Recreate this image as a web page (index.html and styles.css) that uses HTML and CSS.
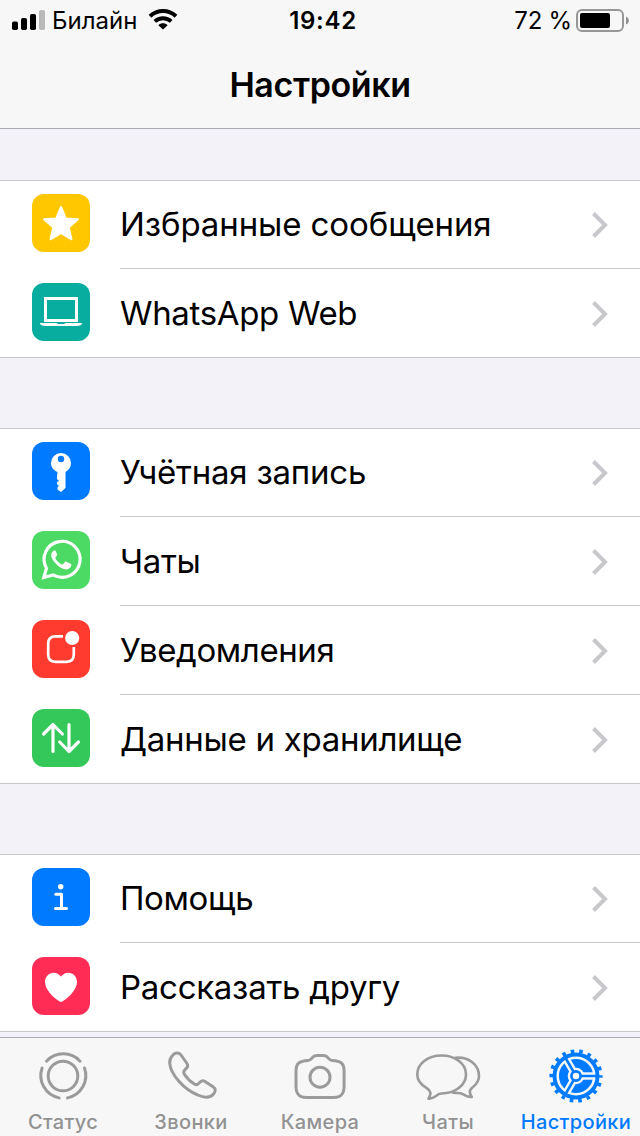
FILE: index.html
```html
<!DOCTYPE html>
<html lang="ru">
<head>
<meta charset="utf-8">
<title>Настройки</title>
<link rel="stylesheet" href="styles.css">
</head>
<body>
<div class="screen">
  <header class="navbar">
    <div class="status">
      <div class="status-left">
        <svg class="signal" width="34" height="21" viewBox="0 0 34 21"><rect x="0" y="11.500" width="6" height="8.500" rx="1.800"/><rect x="9" y="8" width="6" height="12" rx="1.800"/><rect x="18" y="4" width="6" height="16" rx="1.800"/><rect x="27" y="0" width="6" height="20" rx="1.800" fill="#b9b9b9"/></svg>
        <span class="carrier">Билайн</span>
        <svg class="wifi" width="30" height="22" viewBox="0 0 30 22" fill="none" stroke="#000"><path d="M2 7.200C9.500 .3 20.500 .3 28 7.200" stroke-width="4"/><path d="M6.800 12.400c4.600-4.200 11.800-4.200 16.400 0" stroke-width="3.800"/><path d="M10.400 16.200c2.600-2.500 6.600-2.500 9.200 0L15 20.600z" fill="#000" stroke="none"/></svg>
      </div>
      <span class="clock">19:42</span>
      <div class="status-right">
        <span class="percent">72 %</span>
        <svg width="54" height="23" viewBox="0 0 54 23"><rect x="1" y="1" width="46" height="21" rx="5" fill="none" stroke="#979797" stroke-width="2"/><rect x="4" y="4" width="30" height="15" rx="2"/><path d="M50 7.500c3.800 1.800 3.800 6.200 0 8z" fill="#8f8f8f"/></svg>
      </div>
    </div>
    <h1 class="title">Настройки</h1>
  </header>

  <main class="content">
    <section class="group">
      <div class="row">
        <svg class="icon yellow" viewBox="0 0 58 58"><path d="M29 13.500l4.600 11.200 12 .7-9.200 7.800 2.800 11.800L29 38.700l-10.200 6.300 2.800-11.800-9.200-7.800 12-.7z" fill="#fff" stroke="#fff" stroke-width="2.500" stroke-linejoin="round"/></svg>
        <div class="cell"><span class="label l-fav">Избранные сообщения</span><svg class="chevron" viewBox="0 0 18 28"><path d="M2.500 2.500L14 14 2.500 25.500"/></svg></div>
      </div>
      <div class="row">
        <svg class="icon teal" viewBox="0 0 58 58"><rect x="13.500" y="15.500" width="31" height="22" fill="none" stroke="#fff" stroke-width="3"/><path d="M8 40h16.500l1.500 1h6l1.500-1H50v1q-1.500 2-5 2H13q-3.500 0-5-2z" fill="#fff"/></svg>
        <div class="cell"><span class="label l-web">WhatsApp Web</span><svg class="chevron" viewBox="0 0 18 28"><path d="M2.500 2.500L14 14 2.500 25.500"/></svg></div>
      </div>
    </section>

    <section class="group">
      <div class="row">
        <svg class="icon blue" viewBox="0 0 58 58"><path fill="#fff" fill-rule="evenodd" d="M29 11a10 10 0 0 1 10 10c0 4-2 7-5.500 9v16L29 50l-3.500-2.500v-2.300l1.500-1.400-2-1.500v-2l2-1.500-2-1.800v-2l.5-5C21 28 19 25 19 21a10 10 0 0 1 10-10zM29 13.700a3.200 3.200 0 1 0 0 6.400 3.200 3.200 0 0 0 0-6.400z"/></svg>
        <div class="cell"><span class="label l-acc">Учётная запись</span><svg class="chevron" viewBox="0 0 18 28"><path d="M2.500 2.500L14 14 2.500 25.500"/></svg></div>
      </div>
      <div class="row">
        <svg class="icon lime" viewBox="0 0 58 58"><path d="M11.800 46.500l2.700-9.200a18 18 0 1 1 6.600 6.600z" fill="none" stroke="#fff" stroke-width="3.200"/><path d="M23.400 19.500c-1.500-.5-4.200 1.300-4.200 4.700 0 5.400 9 14.200 14.800 14.200 3 0 5.400-2.100 5.400-4.600 0-.8-.6-1-1.300-1.400l-3.700-1.700c-.9-.4-1.300 0-1.800.6l-1.400 1.700c-.5.600-1 .5-1.700.2-2.600-1.200-4.700-3.200-6-5.700-.3-.6-.2-1 .2-1.500l1.200-1.400c.3-.5.3-.9.100-1.500l-1.600-3.600z" fill="#fff"/></svg>
        <div class="cell"><span class="label l-chat">Чаты</span><svg class="chevron" viewBox="0 0 18 28"><path d="M2.500 2.500L14 14 2.500 25.500"/></svg></div>
      </div>
      <div class="row">
        <svg class="icon red" viewBox="0 0 58 58"><path d="M31 16.300h-7.500q-7.300 0-7.300 7.300v11q0 7.300 7.300 7.300h11q7.300 0 7.300-7.300V27" fill="none" stroke="#fff" stroke-width="2.700"/><circle cx="40.200" cy="18" r="7.100" fill="#fff"/></svg>
        <div class="cell"><span class="label l-notif">Уведомления</span><svg class="chevron" viewBox="0 0 18 28"><path d="M2.500 2.500L14 14 2.500 25.500"/></svg></div>
      </div>
      <div class="row">
        <svg class="icon green" viewBox="0 0 58 58"><path d="M21 42.500V15.500M11.600 25l9.400-9.500 9.300 9.500M37 15.500v27M27.700 33l9.300 9.500 9.400-9.500" fill="none" stroke="#fff" stroke-width="3.200" stroke-linecap="round" stroke-linejoin="round"/></svg>
        <div class="cell"><span class="label l-data">Данные и хранилище</span><svg class="chevron" viewBox="0 0 18 28"><path d="M2.500 2.500L14 14 2.500 25.500"/></svg></div>
      </div>
    </section>

    <section class="group">
      <div class="row">
        <svg class="icon blue" viewBox="0 0 58 58"><circle cx="28.700" cy="18.700" r="2.700" fill="#fff"/><path d="M23.800 26.300h5.700v14.200M23.500 40.500h11" fill="none" stroke="#fff" stroke-width="3" stroke-linecap="round" stroke-linejoin="round"/></svg>
        <div class="cell"><span class="label l-help">Помощь</span><svg class="chevron" viewBox="0 0 18 28"><path d="M2.500 2.500L14 14 2.500 25.500"/></svg></div>
      </div>
      <div class="row">
        <svg class="icon pink" viewBox="0 0 58 58"><path d="M29 19.600c2-2.700 4.400-3.900 7.300-3.900 5 0 8.700 4 8.700 9.100 0 7.700-7.500 15-14.300 19.500q-1.700 1.100-3.400 0C20.500 39.800 13 32.500 13 24.800c0-5.100 3.700-9.100 8.700-9.100 2.900 0 5.300 1.200 7.300 3.900z" fill="#fff"/></svg>
        <div class="cell"><span class="label l-tell">Рассказать другу</span><svg class="chevron" viewBox="0 0 18 28"><path d="M2.500 2.500L14 14 2.500 25.500"/></svg></div>
      </div>
    </section>
  </main>

  <nav class="tabbar">
    <div class="tab shifted">
      <svg width="64" height="56" viewBox="0 0 64 56"><circle cx="32" cy="28" r="14.800"/><path d="M15.500 13.200a22.800 22.800 0 0 1 33.600 0M53.500 20a22.800 22.800 0 0 1-17 29.900M11.100 20a22.800 22.800 0 0 0 17 29.900"/></svg>
      <span>Статус</span>
    </div>
    <div class="tab shifted">
      <svg width="64" height="56" viewBox="0 0 64 56"><path d="M13.500 7.500C16 4.500 19.500 4.200 22 7l6 8.500c1.200 1.800.8 3.300-.4 4.600l-2.200 2.300c-1 1.200-.8 2.400 0 3.800 2.300 3.800 6 7.400 10 9.900 1.300.8 2.500.8 3.600-.1l2.300-2.100c1.400-1.300 3.200-1.300 4.700-.4l8 5.300c3 2 2.600 4.700.8 6.900-3.400 4.200-9.700 4.100-16 1.300C25 41.500 11.500 26.500 10.700 15c-.2-3 .8-5.400 2.800-7.500z"/></svg>
      <span>Звонки</span>
    </div>
    <div class="tab">
      <svg width="64" height="56" viewBox="0 0 64 56"><path d="M20 12.500c2.200 0 2.800-1 3.900-2.400 1.200-1.600 2.300-2.500 4.600-2.500h7.200c2.300 0 3.400.9 4.600 2.500 1.100 1.400 1.700 2.400 3.900 2.400 9 .3 11.900 3.400 11.900 10.500v15c0 8-3.200 11.500-10.600 11.500h-27C11.200 49.500 8 46 8 38V23c0-7.100 3-10.200 12-10.500z"/><circle cx="32" cy="29.200" r="10"/></svg>
      <span>Камера</span>
    </div>
    <div class="tab">
      <svg class="bubbles" width="68" height="56" viewBox="0 0 68 56"><path d="M27.500 7.500c14 0 24.500 8.200 24.500 19S41 45.500 27.500 45.500c-3 0-3.500 1-5.500 2.500-2.500 1.800-5 3-7.500 2.600 1.500-2.500 2.200-4.500 1.800-6.400-.4-2-2.300-3.200-4.200-4.500C6 36 3.300 31.700 3.300 26.500 3.300 16 13.500 7.500 27.500 7.500z"/><path d="M41.500 9.700C55 8.500 65 17 65 28c0 4.500-2 7.800-6 11-2 1.600-3.500 3-3.200 5 .2 2 .8 3.200 2 5-3.500.5-6-1.200-8.500-2.700-2-1.200-4-1.300-6.300-1.300-1.700 0-3-.2-4.500-.6"/></svg>
      <span>Чаты</span>
    </div>
    <div class="tab active">
      <svg width="64" height="56" viewBox="0 0 64 56">
        <circle cx="32" cy="28" r="24.800" fill="none" stroke="#007aff" stroke-width="3.600" stroke-dasharray="3.600 5.057" stroke-dashoffset="1.800"/>
        <circle cx="32" cy="28" r="23.500" fill="#007aff" stroke="none"/>
        <circle cx="32" cy="28" r="18.300" fill="none" stroke="#f7f7f7" stroke-width="2.500"/>
        <g fill="#f7f7f7" stroke="none">
          <circle cx="32" cy="28" r="8.300"/>
          <path d="M38 24.300h12.500v7.400H38z"/>
          <path d="M38 24.300h12.500v7.400H38z" transform="rotate(120 32 28)"/>
          <path d="M38 24.300h12.500v7.400H38z" transform="rotate(240 32 28)"/>
        </g>
        <g fill="none" stroke="#007aff" stroke-width="2.700"><circle cx="32" cy="28" r="4.600"/><path d="M36.500 28H53M29.750 24.100L21.500 9.800M29.750 31.900L21.500 46.200"/></g>
      </svg>
      <span>Настройки</span>
    </div>
  </nav>
</div>
</body>
</html>
```
FILE: styles.css
```css
* { box-sizing: border-box; }
body { margin: 0; font-family: Inter, "Liberation Sans", sans-serif; color: #000; background: #f3f2f9; }
.screen { width: 640px; height: 1136px; display: flex; flex-direction: column; overflow: hidden; }
.navbar { height: 129px; background: #f7f7f7; border-bottom: 1px solid #a9a9b2; flex: none; }
.status { height: 40px; display: grid; grid-template-columns: 1fr auto 1fr; align-items: center; font-size: 24px; line-height: 38px; padding: 0 10px 0 12px; }
.status-left, .status-right { display: flex; align-items: center; }
.status-right { justify-content: flex-end; gap: 4px; }
.signal { margin-right: 6px; }
.wifi { margin-left: 11px; }
.carrier, .clock, .percent { padding-top: 2px; }
.percent { letter-spacing: -.2px; }
.clock { font-weight: 600; letter-spacing: .7px; padding-left: 4px; }
.title { margin: 21px 0 0; text-align: center; font-size: 34px; line-height: 48px; font-weight: 600; letter-spacing: -.4px; }
.content { flex: 1; min-height: 0; padding-top: 51px; display: flex; flex-direction: column; gap: 70px; }
.group { background: #fff; border: solid #c8c7cc; border-width: 1px 0; }
.row { display: grid; grid-template-columns: 88px 520px; padding-left: 32px; height: 89px; }
.row:first-child { height: 87px; }
.icon { width: 58px; height: 58px; border-radius: 12px; align-self: end; margin-bottom: 16px; }
.cell { display: flex; align-items: center; justify-content: space-between; padding-right: 31px; }
.row + .row .cell { border-top: 1px solid #c8c7cc; }
.label { font-size: 33px; line-height: 44px; white-space: nowrap; }
.row:first-child .label { margin-bottom: 2px; }
.l-fav { letter-spacing: -.1px; }
.l-web { letter-spacing: -.33px; }
.l-acc { letter-spacing: -.22px; }
.l-chat { letter-spacing: -.3px; }
.l-notif { letter-spacing: -.4px; }
.l-data { letter-spacing: -.28px; }
.l-help { letter-spacing: -.4px; }
.l-tell { letter-spacing: -.27px; }
.chevron { width: 18px; height: 28px; fill: none; stroke: #c7c7cc; stroke-width: 4; }
.row + .row .chevron { margin-top: 2px; }
.yellow { background: #ffc700; }
.teal { background: #09ad9f; }
.blue { background: #007aff; }
.lime { background: #4cd964; }
.red { background: #ff3b30; }
.green { background: #34c759; }
.pink { background: #ff2d55; }
.tabbar { flex: none; height: 99px; border-top: 1px solid #a9a9b2; background: #f7f7f7; display: grid; grid-template-columns: repeat(5, 128px); }
.tab { display: flex; flex-direction: column; align-items: center; padding-top: 10px; color: #929292; font-size: 20px; line-height: 26px; font-weight: 500; letter-spacing: .35px; white-space: nowrap; }
.tab.shifted { padding-right: 2px; }
.tab svg { display: block; margin-bottom: 5px; fill: none; stroke: #9b9b9b; stroke-width: 3; stroke-linecap: round; stroke-linejoin: round; }
.tab .bubbles { stroke-width: 2.6; }
.tab.active { color: #007aff; }
.tab.active svg { stroke-linecap: butt; }
```
